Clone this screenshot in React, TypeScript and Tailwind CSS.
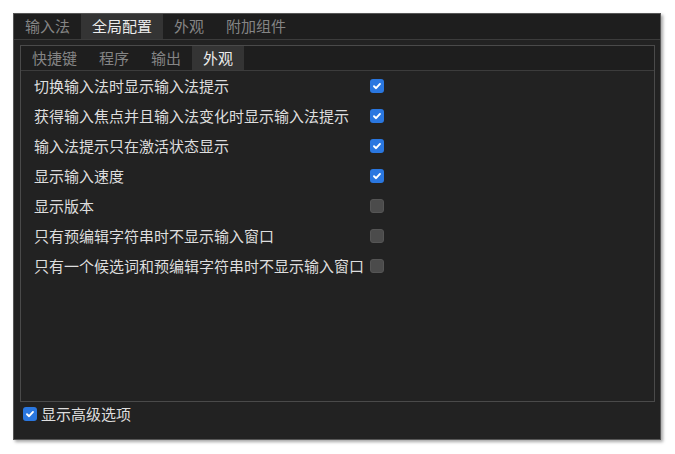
import React from "react";

const font = { fontFamily: '"Noto Sans CJK SC", "Noto Sans", sans-serif' };

function Check({ on }: { on: boolean }) {
  if (!on) {
    return <div className="w-[14px] h-[14px] rounded-[3px] bg-[#4b4b4b] border border-[#555]" />;
  }
  return (
    <div className="w-[14px] h-[14px] rounded-[3px] bg-[#2a77e0] flex items-center justify-center">
      <svg width="10" height="10" viewBox="0 0 10 10">
        <path d="M2 5.2 L4.1 7.2 L8 2.9" fill="none" stroke="#fff" strokeWidth="1.9" strokeLinecap="round" strokeLinejoin="round" />
      </svg>
    </div>
  );
}

const rows: [string, boolean][] = [
  ["切换输入法时显示输入法提示", true],
  ["获得输入焦点并且输入法变化时显示输入法提示", true],
  ["输入法提示只在激活状态显示", true],
  ["显示输入速度", true],
  ["显示版本", false],
  ["只有预编辑字符串时不显示输入窗口", false],
  ["只有一个候选词和预编辑字符串时不显示输入窗口", false],
];

export default function App() {
  const outerTabs = ["输入法", "全局配置", "外观", "附加组件"];
  const innerTabs = ["快捷键", "程序", "输出", "外观"];
  return (
    <div className="w-[675px] h-[454px] bg-white pt-[13px] pl-[13px]" style={font}>
      <div className="w-[648px] h-[427px] bg-[#222222] border border-[#565656] shadow-[2px_2px_3px_rgba(0,0,0,0.35)] flex flex-col">
        <div className="h-[26px] flex bg-[#1e1e1e] border-b border-[#3c3c3c] text-[15px]">
          {outerTabs.map((t, i) => (
            <div
              key={t}
              className={
                i === 1
                  ? "px-[11px] h-full flex items-center bg-[#343434] text-[#ececec]"
                  : "px-[11px] h-full flex items-center text-[#858585]"
              }
            >
              {t}
            </div>
          ))}
        </div>
        <div className="mt-[5px] ml-[6px] w-[635px] h-[357px] border border-[#4a4a4a] bg-[#222222] flex flex-col">
          <div className="h-[25px] flex bg-[#1e1e1e] border-b border-[#3c3c3c] text-[15px]">
            {innerTabs.map((t, i) => (
              <div
                key={t}
                className={
                  i === 3
                    ? "px-[11px] h-full flex items-center bg-[#343434] text-[#ececec]"
                    : "px-[11px] h-full flex items-center text-[#858585]"
                }
              >
                {t}
              </div>
            ))}
          </div>
          <div className="flex flex-col pl-[13px]">
            {rows.map(([label, on]) => (
              <div key={label} className="h-[30px] flex items-center gap-2">
                <div className="w-[328px] whitespace-nowrap text-[15px] text-[#dedede]">{label}</div>
                <Check on={on} />
              </div>
            ))}
          </div>
        </div>
        <div className="flex items-center h-[24px] pl-[9px] gap-[4px]">
          <Check on={true} />
          <span className="text-[15px] text-[#dedede]">显示高级选项</span>
        </div>
      </div>
    </div>
  );
}
